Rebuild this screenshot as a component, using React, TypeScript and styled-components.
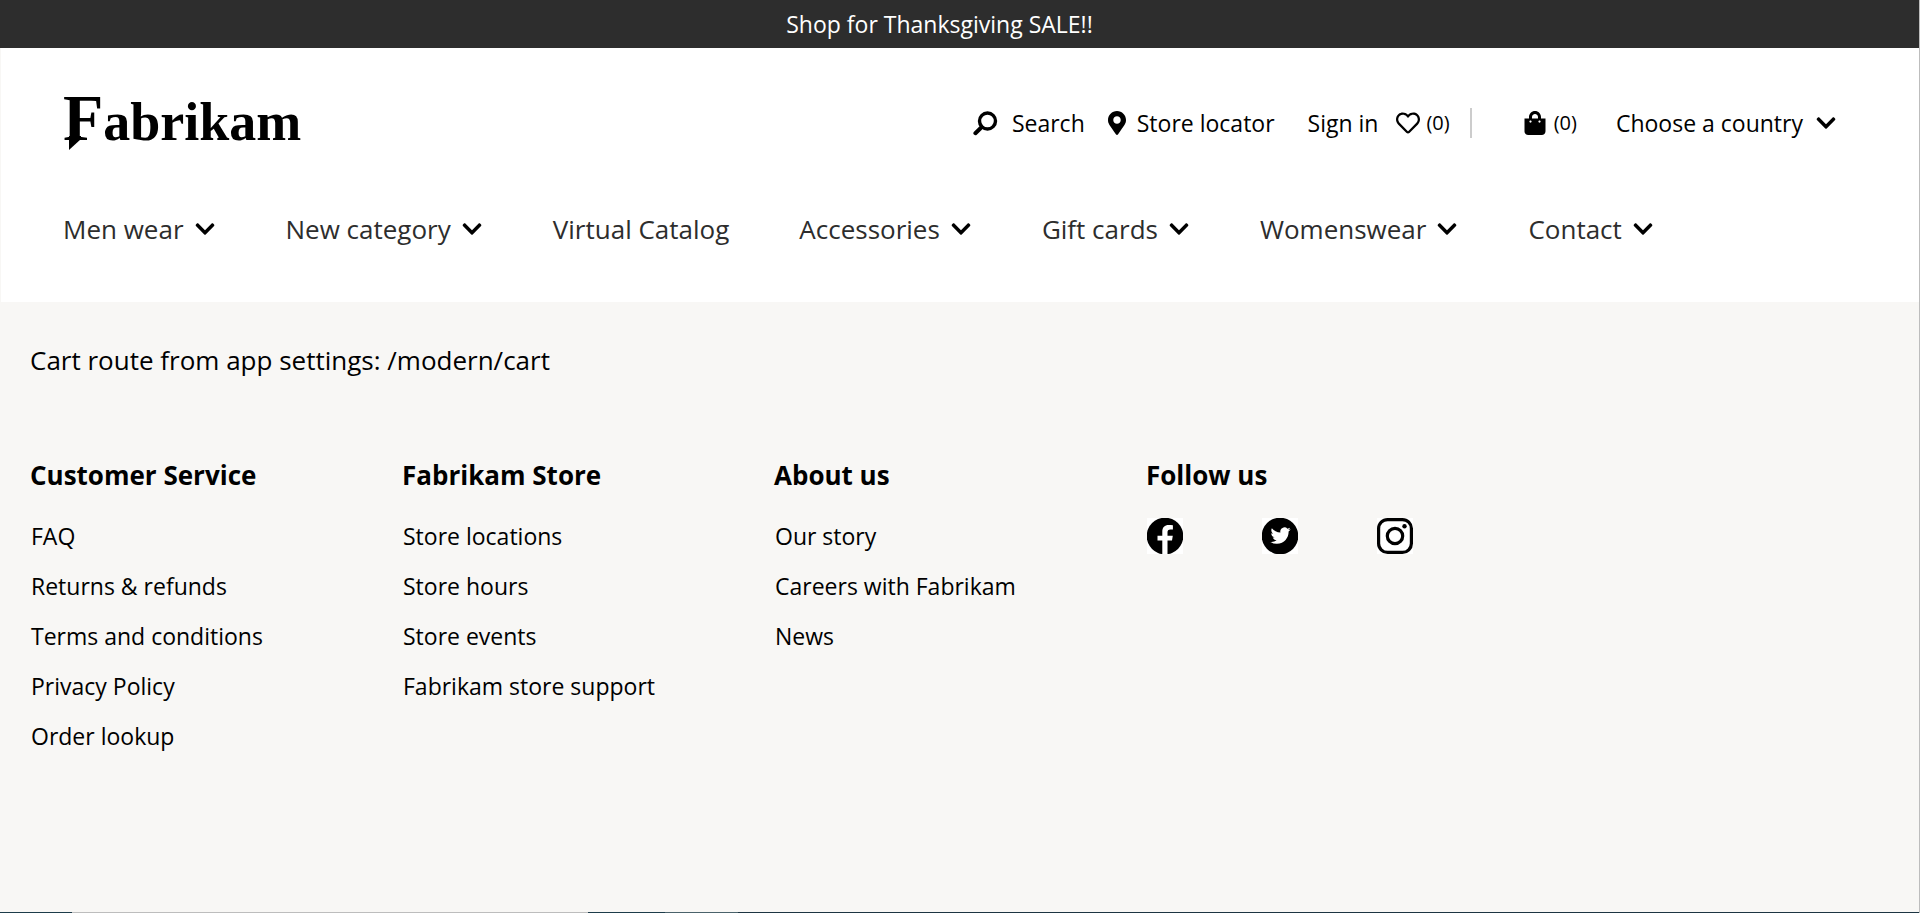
import React from "react";
import styled, { createGlobalStyle } from "styled-components";
import { FaMapMarkerAlt, FaRegHeart, FaShoppingBag, FaChevronDown } from "react-icons/fa";

const GlobalStyle = createGlobalStyle`
  * { box-sizing: border-box; }
  body {
    margin: 0;
    background: #f8f7f5;
    color: #000;
    font-family: "Segoe UI", "Open Sans", "Noto Sans", sans-serif;
    font-size: 23px;
  }
  a { color: inherit; text-decoration: none; }
  button {
    padding: 0;
    border: 0;
    background: none;
    color: inherit;
    font: inherit;
    cursor: pointer;
  }
  ul { margin: 0; padding: 0; list-style: none; }
`;

const Page = styled.div`
  display: flex;
  flex-direction: column;
  min-height: 100vh;
  border-right: 1px solid #bdbdbd;
`;

const PromoBanner = styled.div`
  padding: 8px 40px 8px 0;
  background: #2d2d2d;
  color: #fff;
  line-height: 32px;
  text-align: center;
`;

const Header = styled.header`
  margin-left: 1px;
  padding: 40px 82px 53px 62px;
  background: #fff;
`;

const HeaderTop = styled.div`
  display: flex;
  align-items: center;
  justify-content: space-between;
  height: 70px;
`;

const Logo = styled.a`
  position: relative;
  display: block;
  margin-top: -6px;
  font-family: "Liberation Serif", serif;
  font-size: 54px;
  font-weight: 700;
  line-height: 72px;
  &::first-letter { font-size: 66px; }
`;

const LogoSpike = styled.svg`
  position: absolute;
  left: 6px;
  bottom: 8px;
`;

const Tools = styled.div`
  display: flex;
  align-items: center;
  line-height: 32px;
`;

const ToolButton = styled.button<{ $gap: number; $after: number }>`
  display: flex;
  align-items: center;
  gap: ${(p) => p.$gap}px;
  margin-right: ${(p) => p.$after}px;
  white-space: nowrap;
`;

const ToolLink = styled.a<{ $gap: number; $after: number }>`
  display: flex;
  align-items: center;
  gap: ${(p) => p.$gap}px;
  margin-right: ${(p) => p.$after}px;
  white-space: nowrap;
`;

const Count = styled.span`
  font-size: 20px;
`;

const Divider = styled.span`
  width: 2px;
  height: 30px;
  margin-right: 51px;
  background: #ccc;
`;

const NavList = styled.ul`
  display: flex;
  gap: 70px;
  padding-top: 51px;
  color: #2d2d2d;
  font-size: 26px;
  line-height: 40px;
  white-space: nowrap;
`;

const NavButton = styled.button`
  display: flex;
  align-items: center;
  gap: 10px;
  svg { color: #000; }
`;

const Main = styled.main`
  padding: 38px 30px 0;
  p {
    margin: 0;
    font-size: 26px;
    line-height: 40px;
  }
`;

const Footer = styled.footer`
  flex: 1;
  display: grid;
  grid-template-columns: repeat(4, 372px);
  align-items: start;
  padding: 75px 30px 60px;
`;

const ColumnTitle = styled.h2`
  margin: 0 0 16px;
  font-size: 26px;
  font-weight: 700;
  line-height: 40px;
`;

const FooterLinks = styled.ul`
  padding-left: 1px;
  line-height: 50px;
`;

const SocialLinks = styled.ul`
  display: flex;
  gap: 79px;
  padding: 7px 0 0 1px;
  a, svg { display: block; }
`;

const BottomEdge = styled.div`
  height: 1px;
  background: linear-gradient(to right, #1c3c4a 72px, #bdbdbd 72px 588px, #1c3c4a 588px 665px, #4a626b 665px 738px, #1c3442 738px);
`;

const SearchIcon = () => (
  <svg width="25" height="25" viewBox="0 0 25 25" fill="none" stroke="#000" aria-hidden="true">
    <circle cx="14.5" cy="10" r="8" strokeWidth="3.4" />
    <path d="M8.5 16.2 2.4 22.2" strokeWidth="4" strokeLinecap="round" />
  </svg>
);

const FacebookIcon = () => (
  <svg width="36" height="36" viewBox="0 0 36 36" aria-hidden="true">
    <rect width="36" height="36" fill="#fff" />
    <circle cx="18" cy="18" r="18.3" />
    <path
      fill="#fff"
      d="M15.3 36V22.6h-4.8v-4.9h4.8v-4.3c0-4.2 2.5-6.5 6.3-6.5 1.6 0 3 .2 4.3.4v4.3h-2.4c-2.3 0-3 1.2-3 2.7v3.4h5.3l-.8 4.9h-4.5V36z"
    />
  </svg>
);

const TwitterIcon = () => (
  <svg width="36" height="36" viewBox="0 0 36 36" aria-hidden="true">
    <rect width="36" height="36" fill="#fff" />
    <circle cx="18" cy="18" r="18.3" />
    <path
      fill="#fff"
      transform="translate(8.5 7.5) scale(.84)"
      d="M23.953 4.57a10 10 0 0 1-2.825.775 4.958 4.958 0 0 0 2.163-2.723c-.951.555-2.005.959-3.127 1.184a4.92 4.92 0 0 0-8.384 4.482C7.69 8.095 4.067 6.13 1.64 3.162a4.822 4.822 0 0 0-.666 2.475c0 1.71.87 3.213 2.188 4.096a4.904 4.904 0 0 1-2.228-.616v.06a4.923 4.923 0 0 0 3.946 4.827 4.996 4.996 0 0 1-2.212.085 4.936 4.936 0 0 0 4.604 3.417 9.867 9.867 0 0 1-6.102 2.105c-.39 0-.779-.023-1.17-.067a13.995 13.995 0 0 0 7.557 2.209c9.053 0 13.998-7.496 13.998-13.985 0-.21 0-.42-.015-.63A9.935 9.935 0 0 0 24 4.59z"
    />
  </svg>
);

const InstagramIcon = () => (
  <svg width="36" height="36" viewBox="0 0 36 36" aria-hidden="true">
    <rect width="36" height="36" fill="#fff" />
    <rect x="1.6" y="1.6" width="32.8" height="32.8" rx="9" fill="none" stroke="#000" strokeWidth="3.2" />
    <circle cx="18" cy="18" r="7.7" fill="none" stroke="#000" strokeWidth="3.2" />
    <circle cx="27.5" cy="8.3" r="2.2" />
  </svg>
);

const Chevron = () => <FaChevronDown size={22} aria-hidden />;

const categories = [
  { label: "Men wear", menu: true },
  { label: "New category", menu: true },
  { label: "Virtual Catalog", menu: false },
  { label: "Accessories", menu: true },
  { label: "Gift cards", menu: true },
  { label: "Womenswear", menu: true },
  { label: "Contact", menu: true },
];

const columns = [
  {
    title: "Customer Service",
    links: ["FAQ", "Returns & refunds", "Terms and conditions", "Privacy Policy", "Order lookup"],
  },
  {
    title: "Fabrikam Store",
    links: ["Store locations", "Store hours", "Store events", "Fabrikam store support"],
  },
  { title: "About us", links: ["Our story", "Careers with Fabrikam", "News"] },
];

const socials = [
  { name: "Facebook", Icon: FacebookIcon },
  { name: "Twitter", Icon: TwitterIcon },
  { name: "Instagram", Icon: InstagramIcon },
];

export default function App() {
  return (
    <Page>
      <GlobalStyle />
      <PromoBanner>Shop for Thanksgiving SALE!!</PromoBanner>
      <Header>
        <HeaderTop>
          <Logo href="#">
            Fabrikam
            <LogoSpike width="12" height="14" viewBox="0 0 12 14" aria-hidden="true">
              <path d="M0 0h12v3L0 14z" />
            </LogoSpike>
          </Logo>
          <Tools>
            <ToolButton $gap={14} $after={20}>
              <SearchIcon />
              Search
            </ToolButton>
            <ToolLink href="#" $gap={8} $after={33}>
              <FaMapMarkerAlt size={24} aria-hidden />
              Store locator
            </ToolLink>
            <ToolLink href="#" $gap={0} $after={18}>
              Sign in
            </ToolLink>
            <ToolLink href="#" aria-label="Wishlist" $gap={6} $after={20}>
              <FaRegHeart size={24} aria-hidden />
              <Count>(0)</Count>
            </ToolLink>
            <Divider />
            <ToolButton aria-label="Bag" $gap={7} $after={39}>
              <FaShoppingBag size={24} aria-hidden />
              <Count>(0)</Count>
            </ToolButton>
            <ToolButton $gap={12} $after={0}>
              Choose a country
              <Chevron />
            </ToolButton>
          </Tools>
        </HeaderTop>
        <nav>
          <NavList>
            {categories.map(({ label, menu }) => (
              <li key={label}>
                {menu ? (
                  <NavButton>
                    {label}
                    <Chevron />
                  </NavButton>
                ) : (
                  <a href="#">{label}</a>
                )}
              </li>
            ))}
          </NavList>
        </nav>
      </Header>
      <Main>
        <p>Cart route from app settings: /modern/cart</p>
      </Main>
      <Footer>
        {columns.map(({ title, links }) => (
          <section key={title}>
            <ColumnTitle>{title}</ColumnTitle>
            <FooterLinks>
              {links.map((link) => (
                <li key={link}>
                  <a href="#">{link}</a>
                </li>
              ))}
            </FooterLinks>
          </section>
        ))}
        <section>
          <ColumnTitle>Follow us</ColumnTitle>
          <SocialLinks>
            {socials.map(({ name, Icon }) => (
              <li key={name}>
                <a href="#" aria-label={name}>
                  <Icon />
                </a>
              </li>
            ))}
          </SocialLinks>
        </section>
      </Footer>
      <BottomEdge />
    </Page>
  );
}
